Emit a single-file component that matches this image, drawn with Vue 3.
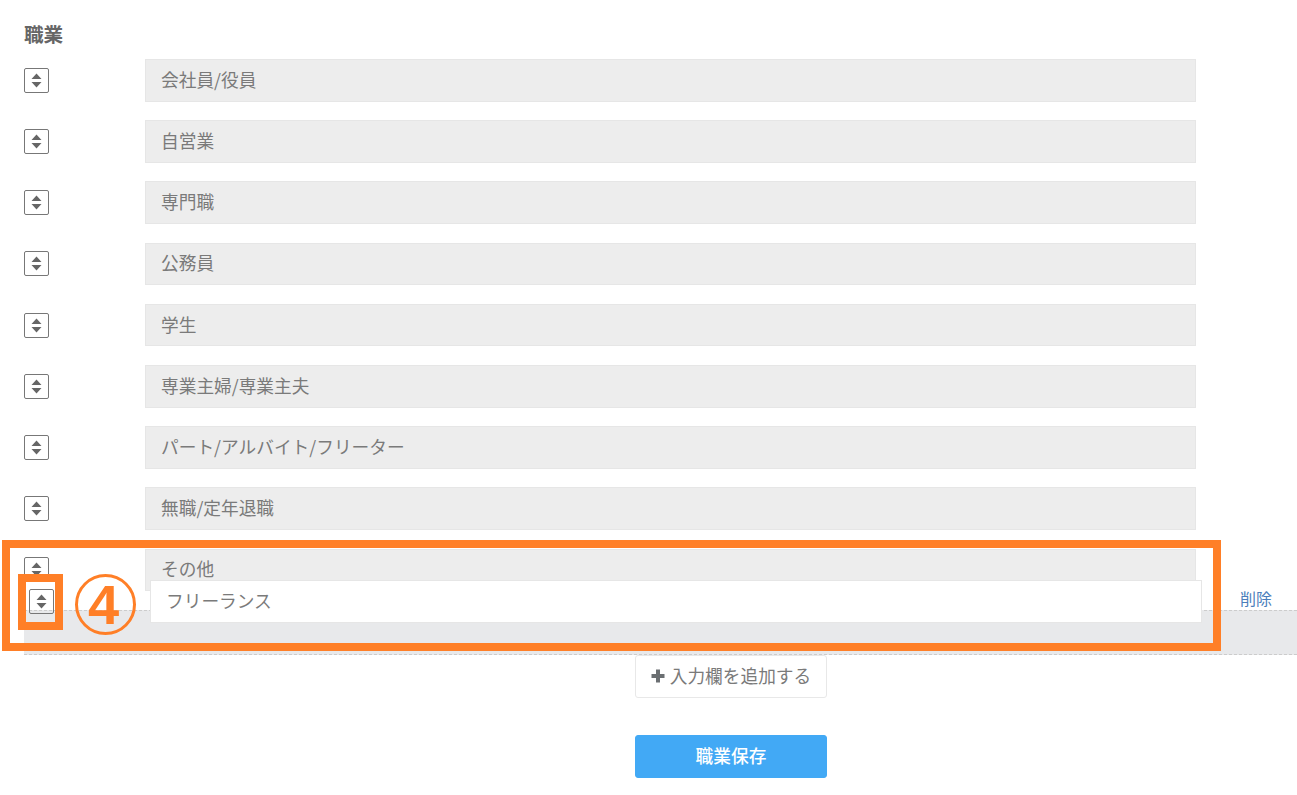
<script setup>
const jobs = [
  '会社員/役員',
  '自営業',
  '専門職',
  '公務員',
  '学生',
  '専業主婦/専業主夫',
  'パート/アルバイト/フリーター',
  '無職/定年退職',
  'その他'
]
</script>

<template>
  <div class="page">
    <h2 class="title">職業</h2>

    <div class="job-list">
      <div v-for="job in jobs" :key="job" class="job-row">
        <span class="handle">
          <svg width="11" height="15" viewBox="0 0 11 15"><path d="M5.5 0.5 10.5 6H0.5ZM5.5 14.5 0.5 9H10.5Z" /></svg>
        </span>
        <div class="job-input">{{ job }}</div>
      </div>
    </div>

    <div class="placeholder"></div>

    <div class="actions">
      <button class="add-btn" type="button">
        <svg width="14" height="14" viewBox="0 0 14 14"><path d="M5 0.5H9V5H13.5V9H9V13.5H5V9H0.5V5H5Z" /></svg>
        入力欄を追加する
      </button>
      <button class="save-btn" type="button">職業保存</button>
    </div>

    <!-- ドラッグ中の行 -->
    <div class="drag-row">
      <span class="handle">
        <svg width="11" height="15" viewBox="0 0 11 15"><path d="M5.5 0.5 10.5 6H0.5ZM5.5 14.5 0.5 9H10.5Z" /></svg>
      </span>
      <div class="drag-input">フリーランス</div>
      <a class="delete-link">削除</a>
    </div>

    <!-- 注釈 -->
    <div class="mark-outer"></div>
    <div class="mark-inner"></div>
    <div class="mark-number">4</div>
  </div>
</template>

<style scoped>
.page {
  position: relative;
  width: 1297px;
  height: 795px;
  overflow: hidden;
  background: #fff;
  color: #6b6b6b;
  font-family: "Noto Sans CJK JP", "Noto Sans", sans-serif;
}

.title {
  margin: 0;
  padding: 21px 0 23px 24px;
  height: 15px;
  font-size: 19.6px;
  line-height: 25px;
  font-weight: 700;
  color: #666;
}

.job-list {
  display: flex;
  flex-direction: column;
  gap: 18.6px;
  padding-left: 24px;
}

.job-row {
  display: flex;
  align-items: center;
  height: 42.6px;
}

.handle {
  display: flex;
  align-items: center;
  justify-content: center;
  width: 25px;
  height: 25px;
  box-sizing: border-box;
  border: 1px solid #777;
  border-radius: 2px;
  background: #fff;
}

.handle svg {
  fill: #666;
}

.job-input {
  margin-left: 96px;
  width: 1051px;
  height: 100%;
  box-sizing: border-box;
  display: flex;
  align-items: center;
  padding: 0 0 3px 15px;
  background: #ededed;
  border: 1px solid #e6e6e6;
  font-size: 17.7px;
  color: #7a7a7a;
}

.placeholder {
  margin: 19px 0 0 24px;
  height: 45px;
  box-sizing: border-box;
  background: #e8e9eb;
  border-top: 1px dashed #ccc;
  border-bottom: 1px dashed #ccc;
}

.actions {
  display: flex;
  flex-direction: column;
  gap: 37px;
  width: 192px;
  margin-left: 635px;
}

.add-btn,
.save-btn {
  width: 192px;
  height: 43px;
  border-radius: 3px;
  font-family: inherit;
  font-size: 17.7px;
  padding: 0 0 4px;
  display: flex;
  align-items: center;
  justify-content: center;
}

.add-btn {
  gap: 5px;
  background: #fff;
  border: 1px solid #e8e8e8;
  color: #7a7a7a;
}

.add-btn svg {
  fill: #6b6f72;
  margin-top: 2px;
}

.save-btn {
  background: #42a9f5;
  border: 1px solid #42a9f5;
  color: #fff;
  font-weight: 500;
}

.drag-row {
  position: absolute;
  left: 29px;
  top: 580px;
  display: flex;
  align-items: center;
  height: 43px;
}

.drag-row .handle {
  background: transparent;
}

.drag-input {
  margin-left: 96px;
  width: 1052px;
  height: 100%;
  box-sizing: border-box;
  display: flex;
  align-items: center;
  padding: 0 0 3px 15px;
  background: #fff;
  border: 1px solid #e6e6e6;
  font-size: 17.7px;
  color: #7a7a7a;
}

.delete-link {
  margin-left: 38px;
  align-self: flex-start;
  margin-top: 7px;
  font-size: 16px;
  line-height: 22px;
  color: #4a7ebb;
}

.mark-outer,
.mark-inner {
  position: absolute;
  box-sizing: border-box;
  border: 8px solid #ff7f27;
}

.mark-outer {
  left: 2px;
  top: 540px;
  width: 1219px;
  height: 111px;
}

.mark-inner {
  left: 18px;
  top: 574px;
  width: 45px;
  height: 56px;
}

.mark-number {
  position: absolute;
  left: 75px;
  top: 574px;
  width: 61px;
  height: 61px;
  box-sizing: border-box;
  border: 3px solid #ff7f27;
  border-radius: 50%;
  display: flex;
  align-items: center;
  justify-content: center;
  padding-right: 4px;
  color: #ff7f27;
  font-family: "Liberation Sans", Arial, sans-serif;
  font-size: 56px;
  font-weight: 700;
  line-height: 1;
}
</style>
